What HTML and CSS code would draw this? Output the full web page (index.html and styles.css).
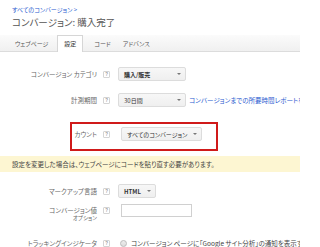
FILE: index.html
```html
<!DOCTYPE html>
<html lang="ja">
<head>
<meta charset="utf-8">
<title>コンバージョン: 購入完了</title>
<link rel="stylesheet" href="styles.css">
</head>
<body>
<div class="page">
  <header class="head">
    <a class="crumb" href="#">すべてのコンバージョン &gt;</a>
    <h1 class="title">コンバージョン: 購入完了</h1>
  </header>
  <nav class="tabs">
    <span class="tab">ウェブページ</span>
    <span class="tab active">設定</span>
    <span class="tab">コード</span>
    <span class="tab">アドバンス</span>
  </nav>
  <div class="form">
    <div class="row row-cat">
      <div class="label"><span class="ltext">コンバージョン カテゴリ</span><span class="help">?</span></div>
      <div class="control"><span class="select w-wide strong"><span class="sv">購入/販売</span><span class="arrow"></span></span></div>
    </div>
    <div class="row row-period">
      <div class="label"><span class="ltext">計測期間</span><span class="help">?</span></div>
      <div class="control"><span class="select w-wide"><span class="sv">30日間</span><span class="arrow"></span></span><a class="link" href="#">コンバージョンまでの所要時間レポートを</a></div>
    </div>
    <div class="highlight">
      <div class="row row-count">
        <div class="label"><span class="ltext">カウント</span><span class="help">?</span></div>
        <div class="control"><span class="select"><span class="sv">すべてのコンバージョン</span><span class="arrow"></span></span></div>
      </div>
    </div>
    <div class="notice">設定を変更した場合は、ウェブページにコードを貼り直す必要があります。</div>
    <div class="row row-markup">
      <div class="label"><span class="ltext">マークアップ言語</span><span class="help">?</span></div>
      <div class="control"><span class="select strong"><span class="sv">HTML</span><span class="arrow"></span></span></div>
    </div>
    <div class="row row-value">
      <div class="label label-stack">
        <div class="lline"><span class="ltext">コンバージョン値</span><span class="help">?</span></div>
        <div class="sub">オプション</div>
      </div>
      <div class="control"><span class="input"></span></div>
    </div>
    <div class="row row-track">
      <div class="label"><span class="ltext">トラッキングインジケータ</span><span class="help">?</span></div>
      <div class="control"><span class="radio"></span><span class="rtext">コンバージョン ページに「Google サイト分析」の通知を表示する</span></div>
    </div>
  </div>
</div>
</body>
</html>
```

FILE: styles.css
```css
html, body {
  margin: 0;
  padding: 0;
  background: #fff;
  overflow: hidden;
}
body {
  font-family: "Noto Sans CJK JP", "Noto Sans", sans-serif;
  font-feature-settings: "palt";
  color: #555;
  width: 300px;
}
.page {
  width: 300px;
}
.head {
  padding: 6px 0 0 12px;
}
.crumb {
  display: block;
  font-size: 6px;
  line-height: 8px;
  color: #2a5bd0;
  text-decoration: none;
}
.title {
  margin: 2px 0 0;
  font-size: 9.5px;
  line-height: 12px;
  font-weight: normal;
  color: #555;
}
.tabs {
  margin-top: 7px;
  height: 16px;
  border-bottom: 1px solid #dcdcdc;
  background: linear-gradient(#fbfbfb, #f0f0f0);
  display: flex;
  align-items: flex-end;
  padding-left: 12px;
}
.tab {
  font-size: 6px;
  line-height: 15px;
  height: 15px;
  padding: 0 3px;
  color: #555;
  margin-right: 6px;
}
.tab.active {
  background: #fff;
  border: 1px solid #d6d6d6;
  border-bottom: none;
  height: 16px;
  margin-bottom: -1px;
  margin-right: 8px;
  padding: 0 6px;
  line-height: 16px;
  color: #333;
}
.form {
  padding-top: 15px;
}
.row {
  display: grid;
  grid-template-columns: 110px 1fr;
  column-gap: 8px;
  align-items: center;
}
.label {
  display: flex;
  justify-content: flex-end;
  align-items: center;
  font-size: 6.5px;
  line-height: 8px;
  color: #666;
  white-space: nowrap;
}
.help {
  display: inline-block;
  box-sizing: border-box;
  width: 7px;
  height: 7px;
  margin-left: 6px;
  border: 1px solid #d4d4d4;
  border-radius: 1px;
  font-size: 4.5px;
  line-height: 5px;
  text-align: center;
  color: #999;
  font-family: "Liberation Sans", sans-serif;
  font-weight: bold;
}
.control {
  display: flex;
  align-items: center;
  white-space: nowrap;
}
.select {
  box-sizing: border-box;
  display: inline-flex;
  align-items: center;
  height: 14px;
  padding: 0 4px 0 5px;
  border: 1px solid #dcdcdc;
  border-radius: 2px;
  background: linear-gradient(#f7f7f7, #efefef);
  font-size: 6px;
  color: #333;
}
.select.strong {
  font-weight: bold;
}
.select.w-wide {
  width: 68px;
  justify-content: space-between;
}
.arrow {
  display: inline-block;
  width: 0;
  height: 0;
  margin-left: 6px;
  border-left: 2px solid transparent;
  border-right: 2px solid transparent;
  border-top: 2px solid #777;
}
.link {
  margin-left: 3px;
  font-size: 6.5px;
  color: #2a5bd0;
  text-decoration: none;
}
.row-period {
  margin-top: 12px;
}
.highlight {
  box-sizing: border-box;
  margin: 15px 0 0 70px;
  width: 148px;
  border: 2px solid #d01a1a;
  padding: 3px 0 8px;
}
.row-count {
  grid-template-columns: 38px 1fr;
  column-gap: 11px;
}
.notice {
  margin-top: 5px;
  height: 16px;
  line-height: 16px;
  background: #fdf6d2;
  padding-left: 12px;
  font-size: 6.5px;
  color: #444;
  white-space: nowrap;
}
.row-markup {
  margin-top: 12px;
}
.row-value {
  margin-top: 6px;
  align-items: start;
}
.label-stack {
  flex-direction: column;
  align-items: flex-end;
  padding-top: 2px;
}
.lline {
  display: flex;
  align-items: center;
}
.sub {
  font-size: 5.5px;
  line-height: 8px;
  padding-right: 13px;
}
.row-value .control {
  padding-left: 3px;
}
.input {
  box-sizing: border-box;
  display: block;
  width: 71px;
  height: 13px;
  border: 1px solid #d0d0d0;
  background: #fff;
}
.row-track {
  margin-top: 16px;
}
.radio {
  box-sizing: border-box;
  display: inline-block;
  width: 7px;
  height: 7px;
  margin-left: 2px;
  border: 1px solid #bbb;
  border-radius: 50%;
  background: linear-gradient(#eee, #ddd);
}
.rtext {
  margin-left: 4px;
  font-size: 6.5px;
  color: #444;
}
```
